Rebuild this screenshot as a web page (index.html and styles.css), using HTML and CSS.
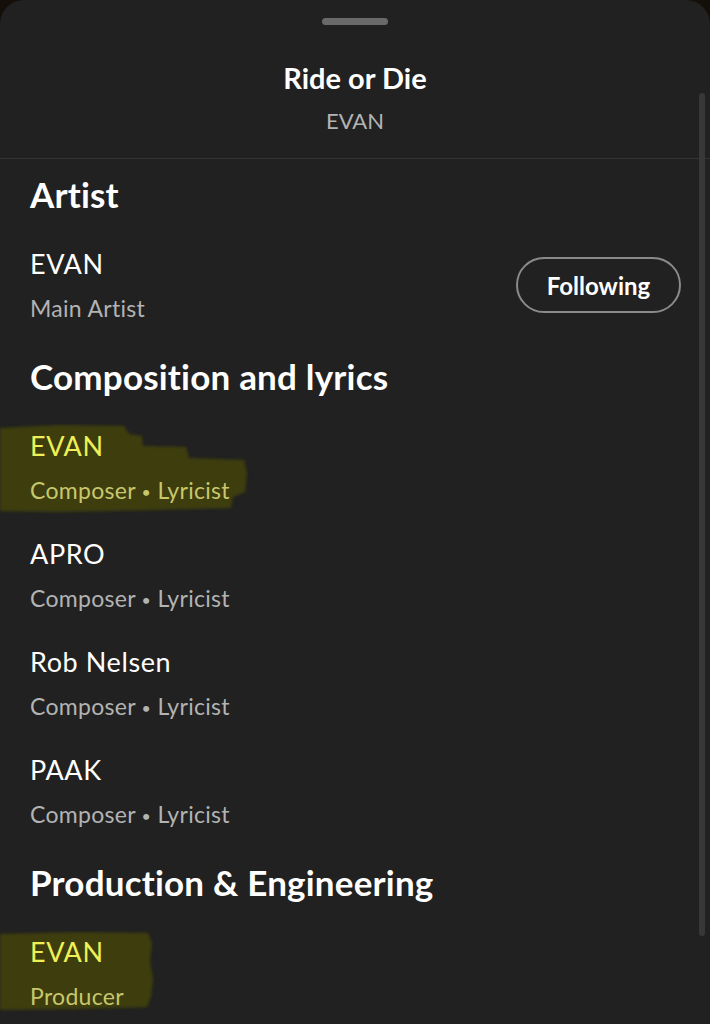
FILE: index.html
```html
<!DOCTYPE html>
<html lang="en">
<head>
<meta charset="utf-8">
<title>Ride or Die – Credits</title>
<link rel="stylesheet" href="styles.css">
</head>
<body>
<div class="sheet">
  <div class="handle"></div>
  <header class="head">
    <div class="title">Ride or Die</div>
    <div class="subtitle">EVAN</div>
  </header>
  <div class="divider"></div>
  <div class="scrollbar"></div>
  <main class="content">
    <h2 class="section">Artist</h2>
    <div class="row row-artist">
      <div class="person">
        <div class="name">EVAN</div>
        <div class="role">Main Artist</div>
      </div>
      <button class="follow">Following</button>
    </div>

    <h2 class="section">Composition and lyrics</h2>
    <div class="row marked">
      <svg class="mark mark-one" width="260" height="92" viewBox="0 0 260 92" aria-hidden="true">
        <defs><filter id="soft1"><feGaussianBlur stdDeviation="1.6"/></filter></defs>
        <path d="M0 4 L60 1 L124 2 L129 10 L142 12 L143 22 L186 23 L189 34 L244 36 L247 50 L245 68 L233 73 L231 84 L150 86 L60 88 L0 87 Z" fill="#3d3c11" filter="url(#soft1)"/>
      </svg>
      <div class="person">
        <div class="name">EVAN</div>
        <div class="role">Composer <span class="dot">•</span> Lyricist</div>
      </div>
    </div>
    <div class="row">
      <div class="person">
        <div class="name">APRO</div>
        <div class="role">Composer <span class="dot">•</span> Lyricist</div>
      </div>
    </div>
    <div class="row">
      <div class="person">
        <div class="name">Rob Nelsen</div>
        <div class="role">Composer <span class="dot">•</span> Lyricist</div>
      </div>
    </div>
    <div class="row">
      <div class="person">
        <div class="name">PAAK</div>
        <div class="role">Composer <span class="dot">•</span> Lyricist</div>
      </div>
    </div>

    <h2 class="section">Production &amp; Engineering</h2>
    <div class="row marked">
      <svg class="mark mark-two" width="170" height="84" viewBox="0 0 170 84" aria-hidden="true">
        <defs><filter id="soft2"><feGaussianBlur stdDeviation="1.6"/></filter></defs>
        <path d="M0 3 L80 1 L148 2 L152 12 L150 30 L153 48 L151 66 L147 76 L80 78 L0 79 Z" fill="#3d3c11" filter="url(#soft2)"/>
      </svg>
      <div class="person">
        <div class="name">EVAN</div>
        <div class="role">Producer</div>
      </div>
    </div>
  </main>
</div>
</body>
</html>
```

FILE: styles.css
```css
html, body {
  margin: 0;
  padding: 0;
}

body {
  background: #150f09;
  font-family: "Lato", "Liberation Sans", sans-serif;
  color: #ffffff;
  width: 710px;
  height: 1024px;
  overflow: hidden;
}

.sheet {
  position: relative;
  background: #212121;
  border-radius: 24px 24px 0 0;
  height: 1024px;
  overflow: hidden;
}

.handle {
  width: 66px;
  height: 7px;
  border-radius: 4px;
  background: #6a6a6a;
  margin: 18px auto 0;
}

.head {
  display: flex;
  flex-direction: column;
  align-items: center;
  padding-top: 37px;
  padding-bottom: 23px;
}

.title {
  font-size: 29px;
  line-height: 32px;
  font-weight: 700;
  letter-spacing: 0;
}

.subtitle {
  margin-top: 13px;
  font-size: 22px;
  line-height: 28px;
  color: #b3b3b3;
}

.divider {
  height: 1px;
  background: #333333;
}

.scrollbar {
  position: absolute;
  right: 5px;
  top: 93px;
  width: 6px;
  height: 843px;
  border-radius: 3px;
  background: #383838;
}

.content {
  display: flex;
  flex-direction: column;
  gap: 34px;
  padding: 15px 29px 0 30px;
}

.section {
  margin: 0;
  font-size: 35px;
  line-height: 40px;
  font-weight: 700;
  letter-spacing: 0.2px;
}

.row {
  position: relative;
  display: flex;
  align-items: center;
  justify-content: space-between;
}

.person {
  position: relative;
  display: flex;
  flex-direction: column;
  gap: 14px;
}

.name {
  font-size: 27px;
  line-height: 32px;
  height: 32px;
  letter-spacing: 0.6px;
  color: #ffffff;
}

.role {
  font-size: 23px;
  line-height: 28px;
  height: 28px;
  letter-spacing: 0.3px;
  color: #b3b3b3;
}

.dot {
  position: relative;
  top: -1px;
  font-size: 16px;
}

.follow {
  width: 165px;
  height: 56px;
  border: 2px solid #8a8a8a;
  border-radius: 28px;
  background: transparent;
  color: #ffffff;
  font-family: inherit;
  font-size: 24px;
  font-weight: 700;
  padding: 0;
}

.mark {
  position: absolute;
  left: -30px;
}

.mark-one {
  top: -6px;
}

.mark-two {
  top: -5px;
}

.marked .name {
  color: #efef57;
}

.marked .role {
  color: #c8c76c;
}
```
